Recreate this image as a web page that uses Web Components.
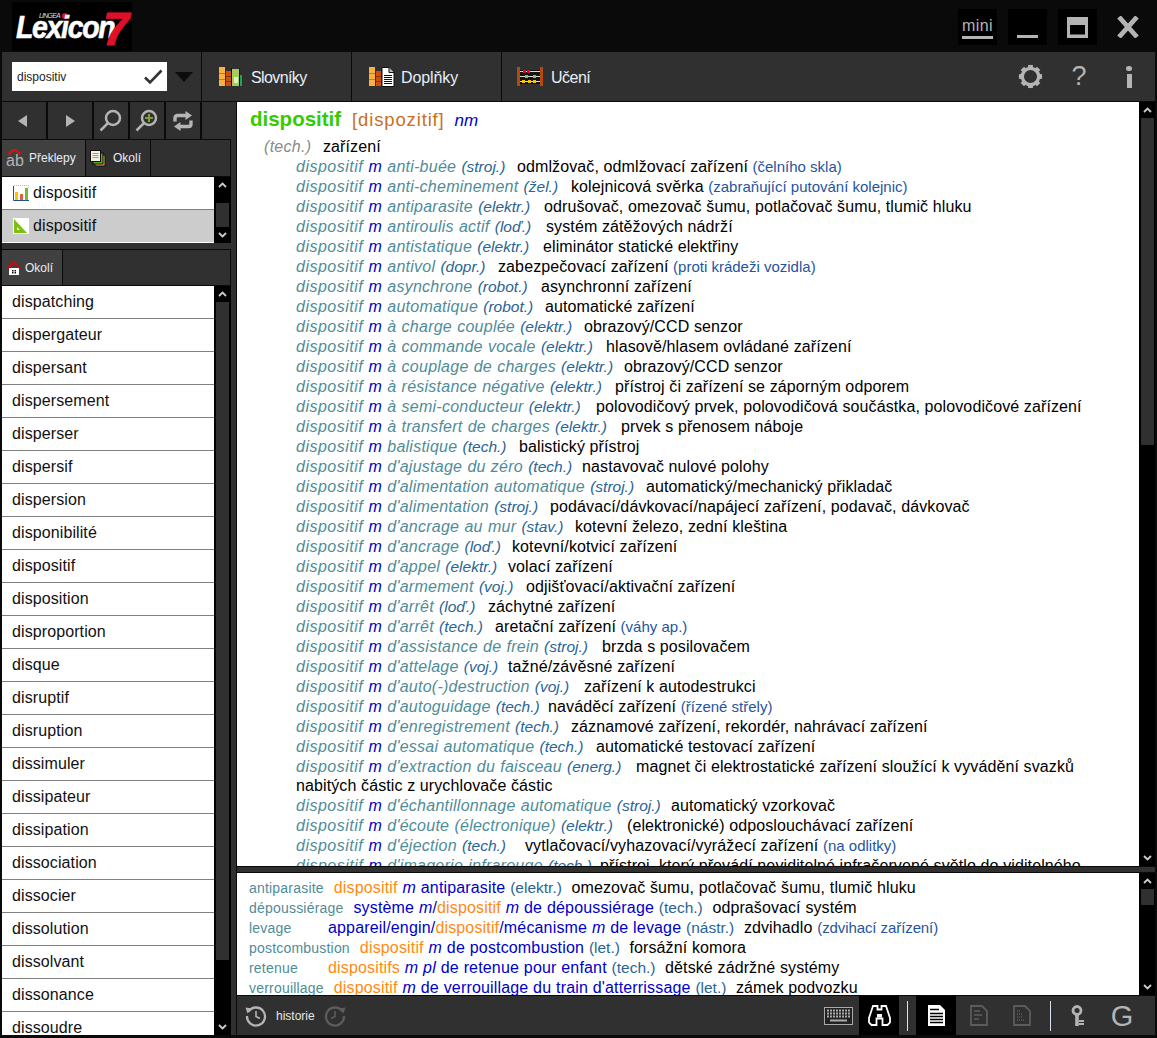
<!DOCTYPE html>
<html><head><meta charset="utf-8"><style>
html,body{margin:0;padding:0;height:1038px;overflow:hidden;background:#0a0a0a;font-family:"Liberation Sans",Arial,sans-serif}
</style></head><body>
<lx-app></lx-app>
<script>
const I={
books:`<svg width="24" height="20" viewBox="0 0 24 20"><rect x="0" y="0" width="6" height="19" fill="#fbb040"/><path d="M0 6.500h6M0 12.500h6" stroke="#c77a1c"/><rect x="7" y="4" width="5" height="15" fill="#c9510c"/><path d="M7 9.500h5M7 14.500h5" stroke="#8a3300"/><rect x="12" y="1" width="1" height="18" fill="#111"/><rect x="13" y="2" width="7" height="17" fill="#a8cc5a"/><rect x="15" y="10" width="4" height="6" fill="#e4efc0"/><rect x="20" y="2" width="1" height="17" fill="#111"/><rect x="21" y="8" width="2" height="11" fill="#1aa55a"/></svg>`,
addons:`<svg width="26" height="20" viewBox="0 0 26 20"><rect x="0" y="0" width="6" height="19" fill="#fbb040"/><path d="M0 6.500h6M0 12.500h6" stroke="#c77a1c"/><rect x="7" y="4" width="5" height="15" fill="#c9510c"/><path d="M7 9.500h5M7 14.500h5" stroke="#8a3300"/><path d="M13 .5h7l5 5v14H13z" fill="#fff" stroke="#111"/><path d="M20 .5v5h5" fill="#bbb" stroke="#111"/><path d="M15 8.500h8M15 10.500h8M15 12.500h8M15 14.500h8M15 16.500h8" stroke="#111"/></svg>`,
abacus:`<svg width="26" height="20" viewBox="0 0 26 20"><rect x="0" y="0" width="3" height="19" fill="#b5480f"/><rect x="23" y="0" width="3" height="19" fill="#b5480f"/><rect x="3" y="3" width="20" height="14" fill="#141414"/><path d="M3 4.500h20M3 9.500h20M3 14.500h20" stroke="#ddd"/><rect x="6" y="3" width="3" height="3" fill="#d8102a"/><rect x="10" y="3" width="3" height="3" fill="#d8102a"/><rect x="8" y="8" width="3" height="3" fill="#9cc04a"/><rect x="16" y="8" width="3" height="3" fill="#9cc04a"/><rect x="5" y="13" width="3" height="3" fill="#f5c400"/><rect x="11" y="13" width="3" height="3" fill="#f5c400"/><rect x="16" y="13" width="3" height="3" fill="#f5c400"/></svg>`,
gear:`<svg width="25" height="25" viewBox="0 0 26 26"><circle cx="13" cy="13" r="8.500" fill="none" stroke="#b4b4b4" stroke-width="3.400"/><g fill="#b4b4b4"><rect x="10.500" y="1" width="5" height="3.500"/><rect x="10.500" y="21.500" width="5" height="3.500"/><rect x="1" y="10.500" width="3.500" height="5"/><rect x="21.500" y="10.500" width="3.500" height="5"/><rect x="10.500" y="1" width="5" height="3.500" transform="rotate(45 13 13)"/><rect x="10.500" y="21.500" width="5" height="3.500" transform="rotate(45 13 13)"/><rect x="1" y="10.500" width="3.500" height="5" transform="rotate(45 13 13)"/><rect x="21.500" y="10.500" width="3.500" height="5" transform="rotate(45 13 13)"/></g></svg>`,
mag:`<svg width="24" height="24" viewBox="0 0 24 24"><circle cx="14" cy="9" r="7" fill="none" stroke="#b4b4b4" stroke-width="2.500"/><path d="M9 14 1.500 21.500" stroke="#b4b4b4" stroke-width="2.500"/></svg>`,
magp:`<svg width="24" height="24" viewBox="0 0 24 24"><circle cx="14" cy="9" r="7" fill="none" stroke="#b4b4b4" stroke-width="2.500"/><path d="M9 14 1.500 21.500" stroke="#b4b4b4" stroke-width="2.500"/><path d="M14 5v8M10 9h8" stroke="#7ca234" stroke-width="2.200"/></svg>`,
sync:`<svg width="20" height="20" viewBox="0 0 20 20"><g fill="none" stroke="#b4b4b4" stroke-width="3.400"><path d="M2 10.500V7q0-2.500 2.500-2.500H13"/><path d="M18 9.500V13q0 2.500-2.500 2.500H7"/></g><path d="M12.500 0 19 4.500 12.500 9zM7.500 11 1 15.500 7.500 20z" fill="#b4b4b4"/></svg>`,
ab:`<svg width="17" height="24" viewBox="0 0 17 24"><path d="M4 7Q8.500 1 13 7" fill="none" stroke="#e01010" stroke-width="1.800"/><path d="M2 5 6 7.500 3 9.500zM15 5 11 7.500 14 9.500z" fill="#e01010"/></svg>`,
pages:`<svg width="16" height="17" viewBox="0 0 16 17"><rect x="5" y="5" width="10" height="11" fill="#f3a858" stroke="#111"/><rect x="3" y="3" width="10" height="11" fill="#4fae1f" stroke="#111"/><rect x="0.500" y="0.500" width="10" height="11" fill="#f5f0e0" stroke="#111"/><path d="M2.500 3.500h6M2.500 5.500h6M2.500 7.500h6" stroke="#999"/></svg>`,
chart:`<svg width="16" height="16" viewBox="0 0 16 16"><rect width="16" height="16" fill="#fff"/><path d="M.5 1v14.500H16" fill="none" stroke="#1d4f91"/><path d="M1 .5h15M15.500 0v3" stroke="#bbb" stroke-dasharray="1 1"/><rect x="2" y="7" width="3" height="8" fill="#f5c400"/><rect x="7" y="9" width="3" height="6" fill="#e0603a"/><rect x="12" y="3" width="3" height="12" fill="#6fbf2a"/></svg>`,
tri:`<svg width="16" height="16" viewBox="0 0 16 16"><rect width="16" height="16" fill="#fff"/><path d="M1 1v14h13zM4 9v3h3z" fill="#7cc110" fill-rule="evenodd"/></svg>`,
house:`<svg width="14" height="14" viewBox="0 0 14 14"><path d="M2 7v7h10V7z" fill="#fff"/><path d="M.5 7.500 7 1l6.500 6.500" fill="none" stroke="#e00000" stroke-width="1.800"/><path d="M5 9h1.500v1.500H5zM7.500 9H9v1.500H7.500zM5 11h1.500v1.500H5zM7.500 11H9v1.500H7.500z" fill="#111"/></svg>`,
check:`<svg width="20" height="16" viewBox="0 0 20 16"><path d="M2 8.500 7 13.500 18.500 1.500" fill="none" stroke="#333" stroke-width="2.600"/></svg>`,
hist:`<svg width="22" height="22" viewBox="0 0 22 22"><path d="M3.500 6.500A9 9 0 1 1 2 11" fill="none" stroke="C" stroke-width="2.300"/><path d="M.5 2.500 7 3.500 2.500 8.500z" fill="C"/><path d="M11 6v5.500l4 2" fill="none" stroke="C" stroke-width="1.600"/></svg>`,
kbd:`<svg width="29" height="18" viewBox="0 0 29 18"><rect x=".5" y=".5" width="28" height="17" fill="#222" stroke="#aaa"/><path d="M3 3.500h23M3 6.500h23M3 9.500h23" stroke="#aaa" stroke-width="2" stroke-dasharray="2 1"/><path d="M6 13.500h17" stroke="#aaa" stroke-width="2"/></svg>`,
bino:`<svg width="23" height="21" viewBox="0 0 23 21"><path d="M5 1h4.500v3.500h4V1H18l1.500 4.500L22 13v4.500L19.500 20h-5v-6.500h-6V20h-5L1 17.500V13l2.500-7.500z" fill="none" stroke="#fff" stroke-width="1.800"/><path d="M9 9h5v3.500H9z" fill="#fff"/></svg>`,
doc:`<svg width="17" height="21" viewBox="0 0 17 21"><path d="M0 0h12l5 5v16H0z" fill="#fff"/><path d="M2 4.500h9M2 8.500h13M2 11.500h13M2 14.500h13M2 17.500h13" stroke="#000" stroke-width="1.300"/></svg>`,
doc2:`<svg width="18" height="21" viewBox="0 0 18 21"><path d="M1 1h11l5 5v14H1z" fill="none" stroke="#5c5c5c" stroke-width="1.800"/><path d="M4 6h6M4 10h8M4 14h5" stroke="#5c5c5c" stroke-width="1.400"/></svg>`,
doc3:`<svg width="18" height="21" viewBox="0 0 18 21"><path d="M1 1h11l5 5v14H1z" fill="none" stroke="#5c5c5c" stroke-width="1.800"/><path d="M4 6h3M4 9h6M4 12h6M4 15h8" stroke="#5c5c5c" stroke-width="1.400" stroke-dasharray="1 1"/></svg>`,
key:`<svg width="14" height="21" viewBox="0 0 14 21"><circle cx="6" cy="5.500" r="4" fill="none" stroke="#b4b4b4" stroke-width="2.800"/><path d="M6 9v12" stroke="#b4b4b4" stroke-width="3.600"/><path d="M8 15h5v2H8zM8 18h5v2H8z" fill="#b4b4b4"/></svg>`,
up:`<svg width="9" height="6" viewBox="0 0 9 6"><path d="M1 5 4.500 1.500 8 5" fill="none" stroke="#ccc" stroke-width="1.800"/></svg>`,
down:`<svg width="9" height="6" viewBox="0 0 9 6"><path d="M1 1 4.500 4.500 8 1" fill="none" stroke="#ccc" stroke-width="1.800"/></svg>`
};
function el(name,css,html){customElements.define(name,class extends HTMLElement{constructor(){super();this.attachShadow({mode:'open'}).innerHTML=`<style>${css}</style>${html}`;}});}

customElements.define('lx-scroll',class extends HTMLElement{connectedCallback(){
 const s=this.attachShadow({mode:'open'});
 const t=this.getAttribute('thumb')||'0';const h=this.getAttribute('h')||'20';
 s.innerHTML=`<style>:host{display:flex;flex-direction:column;background:#000;width:${this.getAttribute('w')||16}px;flex:none}
 .a{height:16px;display:flex;align-items:center;justify-content:center;flex:none}.t{flex:1;position:relative}
 .t i{position:absolute;left:${this.getAttribute('il')||2}px;right:${this.getAttribute('ir')||1}px;top:${t}px;height:${h}px;background:#303030}</style>
 <div class="a">${I.up}</div><div class="t"><i></i></div><div class="a">${I.down}</div>`;
}});

el('lx-titlebar',`:host{display:flex;height:52px;background:#0a0a0a;position:relative;align-items:flex-start;flex:none}
.logo{margin:2px 0 0 12px;width:120px;height:49px;background:#000;position:relative;overflow:hidden;color:#fff}
.lx{position:absolute;left:4px;top:13px;font:italic bold 32px/24px "Liberation Sans";letter-spacing:-1.500px;transform:scaleX(.89);transform-origin:0 0;-webkit-text-stroke:.6px #fff}
.li{position:absolute;left:27px;top:10px;font:italic 7px/7px "Liberation Sans";color:#ddd;letter-spacing:-.8px}
.dot{position:absolute;left:50px;top:11px;width:6px;height:6px;border-radius:50%;background:#e0102a}
.sv{position:absolute;left:91px;top:8px;font:italic bold 47px/38px "Liberation Sans";color:#e0102a;-webkit-text-stroke:1px #e0102a}
.btns{margin-left:auto;display:flex;align-items:flex-start;padding-top:9px;padding-right:16px}
.b{width:39px;height:36px;background:#000;margin-right:11px;display:flex;align-items:center;justify-content:center;position:relative;color:#b4b4b4}
.mini{font:16px/16px "Liberation Sans";border-bottom:3px solid #b4b4b4;letter-spacing:.4px;margin-top:3px;padding-bottom:2px}
.x{background:none;width:26px;margin-right:0;margin-left:7px}
`,`<div class="logo"><span class="li">LINGEA</span><span class="dot"></span><span class="lx">Lexicon</span><span class="sv">7</span></div>
<div class="btns"><div class="b"><span class="mini">mini</span></div>
<div class="b"><svg width="22" height="24" viewBox="0 0 22 24"><rect y="20" width="21" height="3" fill="#b4b4b4"/></svg></div>
<div class="b"><svg width="21" height="21" viewBox="0 0 21 21"><rect width="21" height="21" fill="#b4b4b4"/><rect x="3" y="8" width="15" height="9.500" fill="#000"/></svg></div>
<div class="b x"><svg width="24" height="22" viewBox="0 0 24 22"><path d="M3 1 21 21M21 1 3 21" stroke="#b4b4b4" stroke-width="4.800"/></svg></div></div>`);

el('lx-toolbar',`:host{display:flex;height:49px;margin:0 2px 0 2px;background:#303030;border-bottom:1px solid #0a0a0a;color:#e6eef8;flex:none;align-items:stretch}
.s{width:199px;display:flex;align-items:center;border-right:1px solid #0a0a0a;flex:none}
.inp{margin-left:10px;width:155px;height:29px;background:#fff;display:flex;align-items:center;justify-content:space-between;box-sizing:border-box;padding:0 4px 0 5px;font:12px "Liberation Sans";color:#222}
.arr{margin-left:8px;width:0;height:0;border:9px solid transparent;border-top:10px solid #0c0c0c;border-bottom:0}
.t{width:150px;display:flex;align-items:center;border-right:1px solid #0a0a0a;font-size:16px;flex:none;padding-left:17px;box-sizing:border-box;gap:8px}
.t span{position:relative;top:1px}
.r{margin-left:auto;display:flex;align-items:center;color:#b4b4b4;padding-right:23px}
.g{display:block;margin-right:22px;line-height:0}.q{font:27px "Liberation Sans";width:28px;text-align:center;margin-right:33px}
.ii{display:flex;flex-direction:column;align-items:center;gap:3px}.ii b{width:6px;height:5px;border-radius:3px;background:#b4b4b4}.ii i{width:5px;height:14px;background:#b4b4b4}
`,`<div class="s"><div class="inp"><span>dispositiv</span>${I.check}</div><div class="arr"></div></div>
<div class="t">${I.books}<span style="letter-spacing:-.6px">Slovníky</span></div><div class="t" style="gap:6px">${I.addons}<span style="letter-spacing:-.1px">Doplňky</span></div>
<div class="t" style="border:0;padding-left:15px">${I.abacus}<span style="letter-spacing:-.5px">Učení</span></div>
<div class="r"><span class="g">${I.gear}</span><span class="q">?</span><span class="ii"><b></b><i></i></span></div>`);

el('lx-nav',`:host{display:flex;height:37px;gap:2px;background:#0a0a0a;padding-bottom:1px;flex:none}
div{background:#303030;display:flex;align-items:center;justify-content:center;height:37px}
.tl{width:0;height:0;border:6px solid transparent;border-right:9px solid #b4b4b4;border-left:0;margin-right:3px}
.tr{width:0;height:0;border:6px solid transparent;border-left:9px solid #b4b4b4;border-right:0}`,
`<div style="width:44px"><i class="tl"></i></div><div style="width:44px"><i class="tr"></i></div><div style="width:34px">${I.mag}</div><div style="width:34px">${I.magp}</div><div style="width:34px">${I.sync}</div><div style="flex:1"></div>`);

customElements.define('lx-tabs',class extends HTMLElement{connectedCallback(){
 const s=this.attachShadow({mode:'open'});
 s.innerHTML=`<style>:host{display:flex;height:${this.getAttribute('h')||36}px;background:#303030;flex:none;color:#e6eef8;font-size:12px;border-bottom:1px solid #0a0a0a}</style><slot></slot>`;
}});
customElements.define('lx-tab',class extends HTMLElement{connectedCallback(){
 const s=this.attachShadow({mode:'open'});const n=this.getAttribute('icon');const ic=n?I[n]:'';const on=this.hasAttribute('on');
 s.innerHTML=`<style>:host{display:flex;align-items:center;width:${this.getAttribute('w')}px;flex:none;box-sizing:border-box;background:${on?'#404040':'#303030'};border-right:1px solid #0a0a0a;padding-left:${this.getAttribute('pl')||2}px;gap:${this.getAttribute('gap')||4}px}
 .ab{position:relative;width:17px;height:24px;display:block}.ab span{position:absolute;left:0;top:6px;font:16px/18px "Liberation Sans";color:#b4b4b4}.ab svg{position:absolute;left:0;top:0}
 .ic{display:flex}</style>
 ${n=='ab'?`<span class="ab">${ic}<span>ab</span></span>`:n?`<span class="ic">${ic}</span>`:''}<slot></slot>`;
}});

customElements.define('lx-row',class extends HTMLElement{connectedCallback(){
 const s=this.attachShadow({mode:'open'});const ic=this.getAttribute('icon');
 s.innerHTML=`<style>:host{display:flex;align-items:center;height:32px;border-bottom:1px solid #808080;background:#fff;color:#111;font-size:16px;letter-spacing:.1px;padding-left:${ic?'11px':'10px'};gap:4px;flex:none}
 :host([sel]){background:#ccc;border-bottom:1px solid #fff}.ic{display:flex}</style>${ic?`<span class="ic">${I[ic]}</span>`:''}<slot></slot>`;
}});

el('lx-list',`:host{display:flex;flex:none;background:#000;overflow:hidden}
.l{width:212px;display:flex;flex-direction:column;background:#fff;overflow:hidden;flex:none}`,`<div class="l"><slot></slot></div><slot name="sb"></slot>`);

const TEAL='#4f8c98',BL='#0000c8',DOM='#2a6496',NOTE='#1f55a0';
const E=[
[517,"anti-buée","stroj.","odmlžovač, odmlžovací zařízení","čelního skla"],
[571,"anti-cheminement","žel.","kolejnicová svěrka","zabraňující putování kolejnic"],
[544,"antiparasite","elektr.","odrušovač, omezovač šumu, potlačovač šumu, tlumič hluku"],
[546,"antiroulis actif","loď.","systém zátěžových nádrží"],
[543,"antistatique","elektr.","eliminátor statické elektřiny"],
[498,"antivol","dopr.","zabezpečovací zařízení","proti krádeži vozidla"],
[541,"asynchrone","robot.","asynchronní zařízení"],
[545,"automatique","robot.","automatické zařízení"],
[584,"à charge couplée","elektr.","obrazový/CCD senzor"],
[606,"à commande vocale","elektr.","hlasově/hlasem ovládané zařízení"],
[624,"à couplage de charges","elektr.","obrazový/CCD senzor"],
[615,"à résistance négative","elektr.","přístroj či zařízení se záporným odporem"],
[596,"à semi-conducteur","elektr.","polovodičový prvek, polovodičová součástka, polovodičové zařízení"],
[621,"à transfert de charges","elektr.","prvek s přenosem náboje"],
[519,"balistique","tech.","balistický přístroj"],
[582,"d'ajustage du zéro","tech.","nastavovač nulové polohy"],
[646,"d'alimentation automatique","stroj.","automatický/mechanický přikladač"],
[550,"d'alimentation","stroj.","podávací/dávkovací/napájecí zařízení, podavač, dávkovač"],
[575,"d'ancrage au mur","stav.","kotevní železo, zední kleština"],
[512,"d'ancrage","loď.","kotevní/kotvicí zařízení"],
[508,"d'appel","elektr.","volací zařízení"],
[526,"d'armement","voj.","odjišťovací/aktivační zařízení"],
[488,"d'arrêt","loď.","záchytné zařízení"],
[495,"d'arrêt","tech.","aretační zařízení","váhy ap."],
[602,"d'assistance de frein","stroj.","brzda s posilovačem"],
[508,"d'attelage","voj.","tažné/závěsné zařízení"],
[584,"d'auto(-)destruction","voj.","zařízení k autodestrukci"],
[548,"d'autoguidage","tech.","naváděcí zařízení","řízené střely"],
[571,"d'enregistrement","tech.","záznamové zařízení, rekordér, nahrávací zařízení"],
[596,"d'essai automatique","tech.","automatické testovací zařízení"],
[636,"d'extraction du faisceau","energ.","magnet či elektrostatické zařízení sloužící k vyvádění svazků nabitých částic z urychlovače částic"],
[671,"d'échantillonnage automatique","stroj.","automatický vzorkovač"],
[627,"d'écoute (électronique)","elektr.","(elektronické) odposlouchávací zařízení"],
[525,"d'éjection","tech.","vytlačovací/vyhazovací/vyrážecí zařízení","na odlitky"],
[600,"d'imagerie infrarouge","tech.","přístroj, který převádí neviditelné infračervené světlo do viditelného spektra"]
];
customElements.define('lx-entry',class extends HTMLElement{connectedCallback(){
 const [x,rest,dom,tr,note]=JSON.parse(this.getAttribute('d'));
 const s=this.attachShadow({mode:'open'});
 s.innerHTML=`<style>:host{display:block;padding-left:59px;padding-right:50px;line-height:20px;color:#000;letter-spacing:.11px}
 :host([wrap]){line-height:19px;padding-bottom:1px}
 .pre{display:inline-block;white-space:nowrap;letter-spacing:.25px;word-spacing:.5px}
 .h{letter-spacing:.5px}
 .k{font-style:italic;color:${TEAL}}.m{font-style:italic;color:${BL}}.d{font-style:italic;color:${DOM};font-size:15.500px;letter-spacing:0}.n{color:${NOTE};font-size:15px;letter-spacing:0}</style>
 <span class="pre" style="width:${x-296}px"><span class="k h">dispositif</span> <span class="m">m</span> <span class="k">${rest}</span> <span class="d">(${dom})</span></span>${tr}${note?` <span class="n">(${note})</span>`:''}`;
 if(tr.length>90)this.setAttribute('wrap','');
}});
customElements.define('lx-article',class extends HTMLElement{connectedCallback(){
 const s=this.attachShadow({mode:'open'});
 s.innerHTML=`<style>:host{display:block;flex:1;background:#fff;overflow:hidden;font-size:16px;min-width:0;padding:0}
 .h{padding:5px 0 0 13px;box-sizing:border-box;display:flex;align-items:baseline;height:35px}
 .w{font:bold 20.500px/24px "Liberation Sans";color:#33cc00}.p{font-size:18.500px;color:#c8701e;margin-left:11px;letter-spacing:.85px}.g{font:italic 17px "Liberation Sans";color:#0000c8;margin-left:10px}
 .t{padding-left:27px;line-height:20px;height:20px;color:#000;letter-spacing:.11px}.t i{color:#8a8a8a;display:inline-block;width:59px;letter-spacing:.3px}</style>
 <div class="h"><span class="w">dispositif</span><span class="p">[dispozitif]</span><span class="g">nm</span></div>
 <div class="t"><i>(tech.)</i>zařízení</div><slot></slot>`;
 this.innerHTML=E.map(e=>`<lx-entry d='${JSON.stringify(e).replace(/'/g,"&#39;")}'></lx-entry>`).join('');
}});

customElements.define('lx-xref',class extends HTMLElement{connectedCallback(){
 const s=this.attachShadow({mode:'open'});
 s.innerHTML=`<style>:host{display:block;white-space:nowrap;line-height:20px;font-size:16px;color:#0000c8;letter-spacing:.16px;word-spacing:.2px}
 .t{display:inline-block;min-width:69px;margin-right:10px;font-size:14px;color:#4f8c98;letter-spacing:.2px;word-spacing:0}
 </style><span class="t">${this.getAttribute('t')}</span><slot></slot>`;
}});
const O=s=>`<span style="color:#ff8a14">${s}</span>`,M=`<i>m</i>`,D=s=>`<span style="color:#2a6496;font-size:15.500px;letter-spacing:0">(${s})</span>`,B=s=>`<span style="color:#000;letter-spacing:.1px">${s}</span>`,N=s=>`<span style="color:#1f55a0;font-size:15px;letter-spacing:-.1px">(${s})</span>`;

el('lx-bottombar',`:host{display:flex;height:39px;background:#303030;align-items:center;flex:none;color:#e6e6e6;font-size:12px}
.a{margin-left:8px;display:flex;margin-right:9px}.f{display:flex;margin-left:9px}
.r{margin-left:auto;display:flex;align-items:center;height:100%}
.c{width:40px;height:39px;display:flex;align-items:center;justify-content:center;flex:none}.on{background:#000}
.sep{width:1px;height:30px;background:#d8e4f4;margin:0 8px}
.G{font:29px/30px "Liberation Sans";color:#b4b4b4}`,
`<span class="a">${I.hist.replace(/"C"/g,'"#b4b4b4"')}</span><span>historie</span><span class="f" style="transform:scaleX(-1)">${I.hist.replace(/"C"/g,'"#5c5c5c"')}</span>
<div class="r"><div class="c" style="margin-right:2px;margin-left:-2px;width:37px">${I.kbd}</div><div class="c on">${I.bino}</div><div class="sep"></div><div class="c on">${I.doc}</div><div class="c" style="margin-left:3px">${I.doc2}</div><div class="c" style="margin-left:3px">${I.doc3}</div><div class="sep" style="margin-left:8px;margin-right:7px"></div><div class="c">${I.key}</div><div class="c G" style="margin:0 13px 0 4px">G</div></div>`);

customElements.define('lx-app',class extends HTMLElement{connectedCallback(){
 const s=this.attachShadow({mode:'open'});
 const W=["dispatching","dispergateur","dispersant","dispersement","disperser","dispersif","dispersion","disponibilité","dispositif","disposition","disproportion","disque","disruptif","disruption","dissimuler","dissipateur","dissipation","dissociation","dissocier","dissolution","dissolvant","dissonance","dissoudre"];
 s.innerHTML=`<style>:host{display:flex;flex-direction:column;height:1038px;width:1157px;overflow:hidden}
 .body{display:flex;flex:1;min-height:0;padding:0 2px 3px 2px;background:#0a0a0a}
 .left{width:229px;display:flex;flex-direction:column;flex:none;background:#303030}
 .gap{height:7px;background:#303030;border-bottom:1px solid #0a0a0a;box-sizing:border-box;flex:none}
 .mid{width:5px;background:#303030;flex:none}
 .right{flex:1;display:flex;flex-direction:column;min-width:0;background:#303030;border-left:1px solid #0a0a0a}
 .pane{display:flex;min-height:0;background:#000;flex:none}
 .split{height:7px;background:#303030;border-top:1px solid #0a0a0a;border-bottom:1px solid #0a0a0a;box-sizing:border-box;flex:none}
 .x{flex:1;background:#fff;font-size:16px;padding:5px 0 0 12px;overflow:hidden;min-width:0;box-sizing:border-box;height:122px}
 .blk{height:1px;background:#0a0a0a;flex:none}
 </style>
 <lx-titlebar></lx-titlebar><lx-toolbar></lx-toolbar>
 <div class="body"><div class="left"><lx-nav></lx-nav>
 <lx-tabs><lx-tab w="84" icon="ab" pl="4" on gap="6"><span>Překlepy</span></lx-tab><lx-tab w="65" icon="pages" pl="4" gap="7">Okolí</lx-tab><lx-tab w="80"></lx-tab></lx-tabs>
 <lx-list style="height:66px"><lx-row icon="chart">dispositif</lx-row><lx-row icon="tri" sel>dispositif</lx-row><lx-scroll slot="sb" w="17" il="2" ir="2" thumb="10" h="24"></lx-scroll></lx-list>
 <div class="gap"></div>
 <lx-tabs h="35"><lx-tab w="61" icon="house" pl="5" gap="4" on>Okolí</lx-tab><lx-tab w="168"></lx-tab></lx-tabs>
 <lx-list style="flex:1;min-height:0">${W.map(w=>`<lx-row>${w}</lx-row>`).join('')}<lx-scroll slot="sb" w="17" il="2" ir="2" thumb="0" h="658"></lx-scroll></lx-list>
 </div><div class="mid"></div>
 <div class="right">
 <div class="pane" style="height:764px"><lx-article></lx-article><lx-scroll thumb="0" h="327" w="16" il="2"></lx-scroll></div>
 <div class="split"></div>
 <div class="pane" style="height:122px"><div class="x">
 <lx-xref t="antiparasite">${O('dispositif')} ${M} antiparasite ${D('elektr.')}&nbsp; ${B('omezovač šumu, potlačovač šumu, tlumič hluku')}</lx-xref>
 <lx-xref t="dépoussiérage">système ${M}/${O('dispositif')} ${M} de dépoussiérage ${D('tech.')}&nbsp; ${B('odprašovací systém')}</lx-xref>
 <lx-xref t="levage">appareil/engin/${O('dispositif')}/mécanisme ${M} de levage ${D('nástr.')}&nbsp; ${B('zdvihadlo')} ${N('zdvihací zařízení')}</lx-xref>
 <lx-xref t="postcombustion">${O('dispositif')} ${M} de postcombustion ${D('let.')}&nbsp; ${B('forsážní komora')}</lx-xref>
 <lx-xref t="retenue">${O('dispositifs')} <i>m pl</i> de retenue pour enfant ${D('tech.')}&nbsp; ${B('dětské zádržné systémy')}</lx-xref>
 <lx-xref t="verrouillage">${O('dispositif')} ${M} de verrouillage du train d'atterrissage ${D('let.')}&nbsp; ${B('zámek podvozku')}</lx-xref>
 </div><lx-scroll thumb="0" h="16" w="16" il="2"></lx-scroll></div>
 <div class="blk"></div>
 <lx-bottombar></lx-bottombar>
 </div></div>`;
}});
</script></body></html>
